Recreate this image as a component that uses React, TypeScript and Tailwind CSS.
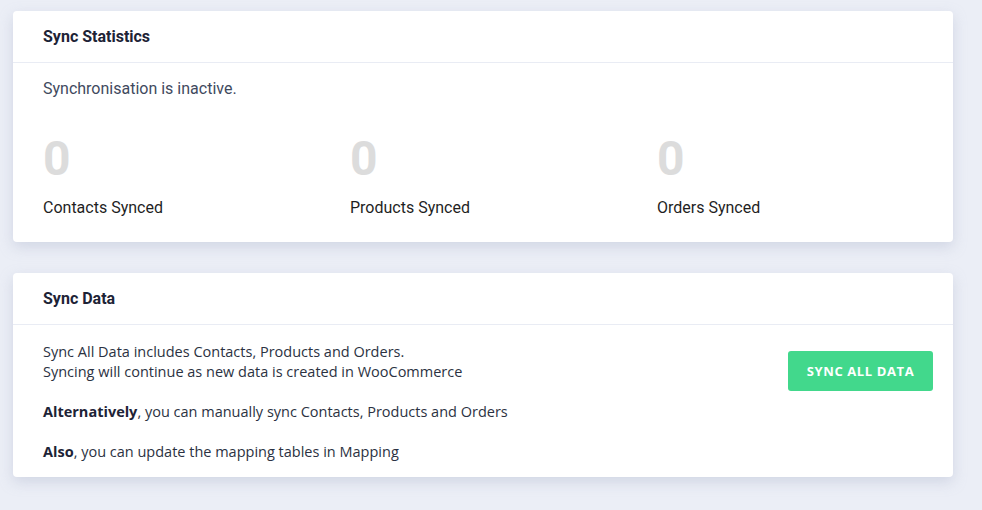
import React from "react";

const stats = [
  { value: 0, label: "Contacts Synced" },
  { value: 0, label: "Products Synced" },
  { value: 0, label: "Orders Synced" },
];

function Card({ title, children }: { title: string; children: React.ReactNode }) {
  return (
    <div className="bg-white rounded-[4px] shadow-[0_5px_14px_rgba(160,170,195,0.35)]">
      <div className="h-[52px] flex items-center px-[30px] border-b border-[#e9ecf4]">
        <h2 className="font-['Roboto',sans-serif] font-bold text-[16px] text-[#1d2336]">{title}</h2>
      </div>
      {children}
    </div>
  );
}

export default function App() {
  return (
    <div className="min-h-[510px] bg-[#ebeef6] pt-[11px] pl-[13px] pr-[29px] pb-[30px] flex flex-col gap-[31px]">
      <Card title="Sync Statistics">
        <div className="pl-[30px] pr-[20px] pt-[15px] pb-[23px] font-['Roboto',sans-serif]">
          <p className="text-[16px] leading-[22px] text-[#3f4a5e]">Synchronisation is inactive.</p>
          <div className="grid grid-cols-[307px_307px_1fr] mt-[31px]">
            {stats.map((s) => (
              <div key={s.label}>
                <div className="text-[48px] leading-[56px] font-bold text-[#dcdcdc]">{s.value}</div>
                <div className="mt-[10px] text-[16px] leading-[22px] text-[#1f1f1f]">{s.label}</div>
              </div>
            ))}
          </div>
        </div>
      </Card>

      <Card title="Sync Data">
        <div className="flex items-start justify-between pl-[30px] pr-[20px] pt-[17px] pb-[15px] font-['Open_Sans',sans-serif] text-[14.5px] leading-[20px] text-[#2b3242]">
          <div className="flex flex-col gap-[20px]">
            <p>
              Sync All Data includes Contacts, Products and Orders.
              <br />
              Syncing will continue as new data is created in WooCommerce
            </p>
            <p>
              <b className="font-bold text-[#1d2336]">Alternatively</b>, you can manually sync Contacts, Products and Orders
            </p>
            <p>
              <b className="font-bold text-[#1d2336]">Also</b>, you can update the mapping tables in Mapping
            </p>
          </div>
          <button className="mt-[9px] w-[145px] h-[40px] rounded-[3px] bg-[#42d88c] text-white text-[13px] font-bold tracking-[0.6px] uppercase">
            Sync All Data
          </button>
        </div>
      </Card>
    </div>
  );
}
